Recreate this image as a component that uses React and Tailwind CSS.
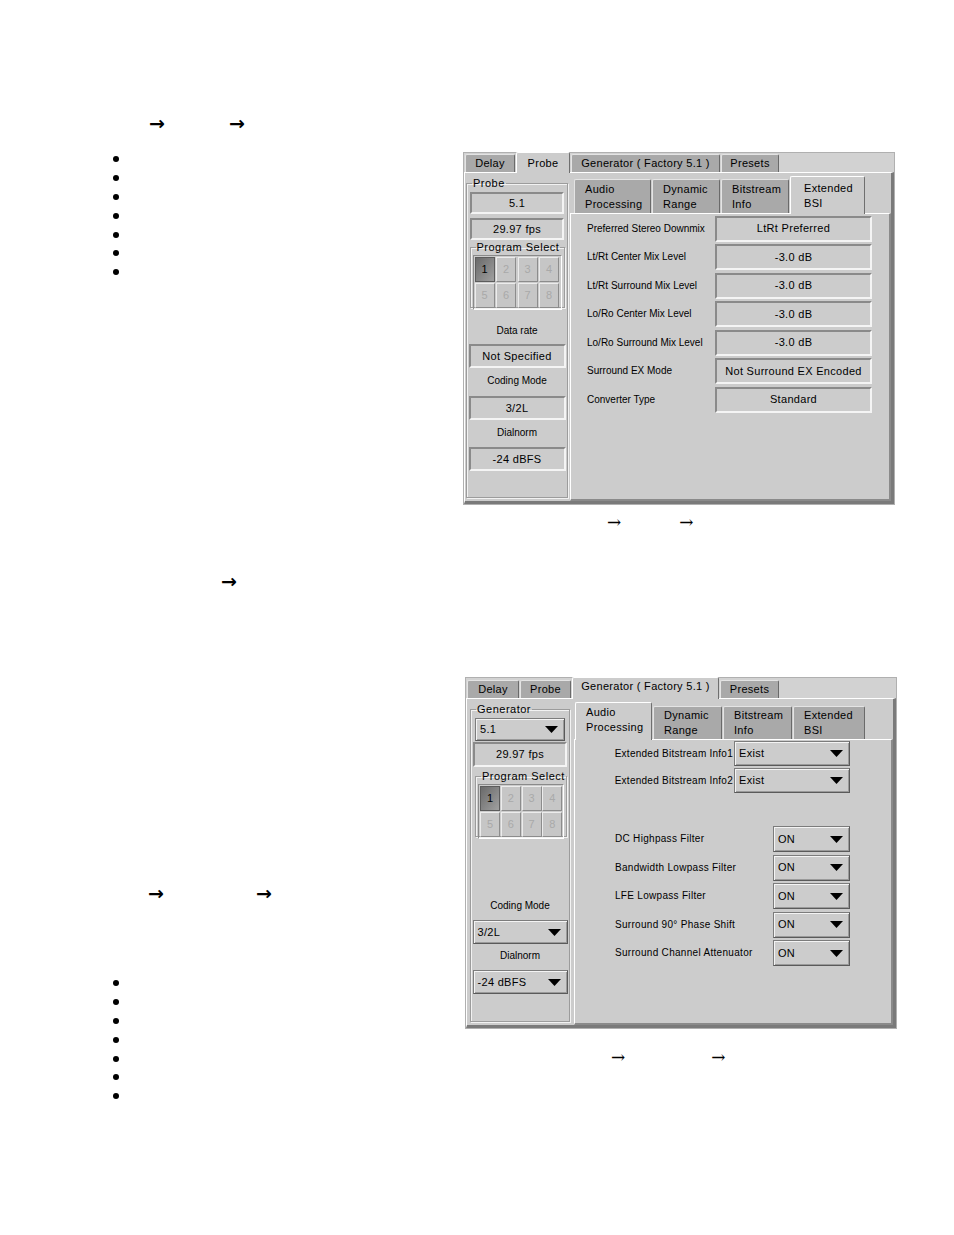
import React from "react";

const SANS = "font-['Liberation_Sans',Arial,sans-serif]";

function Tab({ children, active, w, h, two }) {
  const base =
    "flex flex-col justify-center border-t border-l border-r rounded-t-[2px] text-black tracking-[0.3px] " +
    (two ? "text-[11px] leading-[15px] items-start pl-[10px] " : "text-[11px] leading-none items-center ");
  const cls = active
    ? base + "bg-[#cccccc] border-t-white border-l-white border-r-[#6f6f6f] relative z-10 -mb-px"
    : base + "bg-[#a9a9a9] border-t-[#e4e4e4] border-l-[#e4e4e4] border-r-[#6a6a6a]";
  return (
    <div className={cls} style={{ width: w, height: h }}>
      {children}
    </div>
  );
}

function Sunken({ children, className }) {
  return (
    <div
      className={
        "flex items-center justify-center bg-[#cccccc] border-2 border-t-[#8a8a8a] border-l-[#8a8a8a] border-b-[#f4f4f4] border-r-[#f4f4f4] text-[11px] tracking-[0.3px] text-black " +
        className
      }
    >
      {children}
    </div>
  );
}

function Tri() {
  return (
    <svg width="13" height="7" viewBox="0 0 13 7" className="shrink-0">
      <polygon points="0,0 13,0 6.5,7" fill="#000" />
    </svg>
  );
}

function Drop({ children, className }) {
  return (
    <div
      className={
        "flex items-center justify-between pl-[4px] pr-[6px] bg-[#cccccc] border border-t-[#7c7c7c] border-l-[#7c7c7c] border-b-[#5a5a5a] border-r-[#5a5a5a] shadow-[inset_1px_1px_0_#f4f4f4,inset_-1px_-1px_0_#9a9a9a] text-[11px] tracking-[0.3px] text-black " +
        className
      }
    >
      <span>{children}</span>
      <Tri />
    </div>
  );
}

function Group({ label, children, className }) {
  return (
    <fieldset
      className={
        "border border-[#9c9c9c] shadow-[inset_1px_1px_0_#f2f2f2,1px_1px_0_#f2f2f2] " + className
      }
    >
      <legend className="ml-[5px] px-[1px] text-[11px] tracking-[0.5px] leading-[11px] text-black">
        {label}
      </legend>
      {children}
    </fieldset>
  );
}

function ProgramSelect({ className }) {
  const btn = (n) =>
    n === 1 ? (
      <div
        key={n}
        className="w-[20px] h-[25px] flex items-center justify-center bg-gradient-to-br from-[#6a6a6a] to-[#a0a0a0] border border-[#5c5c5c] text-[11px] text-black"
      >
        1
      </div>
    ) : (
      <div
        key={n}
        className="w-[20px] h-[25px] flex items-center justify-center bg-[#c6c6c6] border border-t-[#ececec] border-l-[#ececec] border-b-[#8c8c8c] border-r-[#8c8c8c] text-[11px] text-[#a9a9a9]"
      >
        {n}
      </div>
    );
  return (
    <Group label="Program Select" className={className}>
      <div className="mx-[2px] mt-[2px] p-[1px] border border-t-[#8a8a8a] border-l-[#8a8a8a] border-b-white border-r-white grid grid-cols-4 gap-[1px]">
        {[1, 2, 3, 4, 5, 6, 7, 8].map(btn)}
      </div>
    </Group>
  );
}

function Bullets({ className }) {
  return (
    <ul className={className}>
      {[0, 1, 2, 3, 4, 5, 6].map((i) => (
        <li key={i} className="h-[18.9px] flex items-center">
          <span className="ml-[113px] w-[6px] h-[6px] rounded-full bg-black" />
        </li>
      ))}
    </ul>
  );
}

function Arrow({ className, thin }) {
  return (
    <span
      className={
        (thin
          ? "font-['DejaVu_Serif',serif] text-[17px] "
          : "font-['DejaVu_Sans',sans-serif] font-bold text-[19px] ") +
        "leading-none text-black " +
        className
      }
    >
      →
    </span>
  );
}

function PanelProbe() {
  const rows = [
    ["Preferred Stereo Downmix", "LtRt Preferred"],
    ["Lt/Rt Center Mix Level", "-3.0 dB"],
    ["Lt/Rt Surround Mix Level", "-3.0 dB"],
    ["Lo/Ro Center Mix Level", "-3.0 dB"],
    ["Lo/Ro Surround Mix Level", "-3.0 dB"],
    ["Surround EX Mode", "Not Surround EX Encoded"],
    ["Converter Type", "Standard"],
  ];
  return (
    <div className={"w-[432px] h-[353px] bg-[#d2d2d2] border border-[#b0b0b0] flex flex-col " + SANS}>
      <div className="h-[19px] flex items-end pl-[1px] gap-[1px]">
        <Tab w={50} h={18}>Delay</Tab>
        <Tab w={54} h={21} active>Probe</Tab>
        <Tab w={149} h={18}>Generator ( Factory 5.1 )</Tab>
        <Tab w={58} h={18}>Presets</Tab>
      </div>
      <div className="flex-1 flex bg-[#cccccc] border-t border-l border-t-white border-l-white border-r-[3px] border-b-[3px] border-r-[#7a7a7a] border-b-[#7a7a7a]">
        <Group label="Probe" className="ml-[1px] mt-[5px] mb-[3px] w-[102px] flex flex-col items-center">
          <Sunken className="mt-[3px] w-[94px] h-[22px]">5.1</Sunken>
          <Sunken className="mt-[4px] w-[94px] h-[22px]">29.97 fps</Sunken>
          <ProgramSelect className="mt-[2px] w-[95px] h-[66px]" />
          <div className="mt-[17px] text-[10px] leading-[12px]">Data rate</div>
          <Sunken className="mt-[7px] w-[97px] h-[24px]">Not Specified</Sunken>
          <div className="mt-[7px] text-[10px] leading-[12px]">Coding Mode</div>
          <Sunken className="mt-[9px] w-[97px] h-[24px]">3/2L</Sunken>
          <div className="mt-[7px] text-[10px] leading-[12px]">Dialnorm</div>
          <Sunken className="mt-[8px] w-[97px] h-[24px]">-24 dBFS</Sunken>
        </Group>
        <div className="flex-1 flex flex-col ml-[2px] mt-[4px]">
          <div className="h-[36px] flex items-end pl-[4px] gap-[1px]">
            <Tab w={77} h={34} two>
              <span>Audio</span>
              <span>Processing</span>
            </Tab>
            <Tab w={68} h={34} two>
              <span>Dynamic</span>
              <span>Range</span>
            </Tab>
            <Tab w={68} h={34} two>
              <span>Bitstream</span>
              <span>Info</span>
            </Tab>
            <Tab w={75} h={38} two active>
              <span className="pl-[3px]">Extended</span>
              <span className="pl-[3px]">BSI</span>
            </Tab>
          </div>
          <div className="flex-1 bg-[#cccccc] border-t border-l border-t-white border-l-white border-r-2 border-b-2 border-r-[#8a8a8a] border-b-[#8a8a8a] pt-[2px] pl-[16px] flex flex-col gap-[3.5px]">
            {rows.map(([l, v]) => (
              <div key={l} className="flex items-center h-[25px]">
                <div className="w-[128px] text-[10px] leading-none text-black">{l}</div>
                <Sunken className="w-[157px] h-[26px]">{v}</Sunken>
              </div>
            ))}
          </div>
        </div>
      </div>
    </div>
  );
}

function PanelGen() {
  const filters = [
    "DC Highpass Filter",
    "Bandwidth Lowpass Filter",
    "LFE Lowpass Filter",
    "Surround 90\u00b0 Phase Shift",
    "Surround Channel Attenuator",
  ];
  return (
    <div className={"w-[432px] h-[352px] bg-[#d2d2d2] border border-[#b0b0b0] flex flex-col " + SANS}>
      <div className="h-[20px] flex items-end pl-[1px] gap-[1px]">
        <Tab w={52} h={18}>Delay</Tab>
        <Tab w={51} h={18}>Probe</Tab>
        <Tab w={147} h={22} active>
          <span className="-mt-[4px]">Generator ( Factory 5.1 )</span>
        </Tab>
        <Tab w={59} h={18}>Presets</Tab>
      </div>
      <div className="flex-1 flex bg-[#cccccc] border-t border-l border-t-white border-l-white border-r-[3px] border-b-[3px] border-r-[#7a7a7a] border-b-[#7a7a7a]">
        <Group label="Generator" className="ml-[3px] mt-[5px] mb-[3px] w-[100px] flex flex-col items-center">
          <Drop className="mt-[3px] w-[90px] h-[23px]">5.1</Drop>
          <Sunken className="mt-[1px] w-[94px] h-[25px]">29.97 fps</Sunken>
          <ProgramSelect className="mt-[4px] ml-[4px] w-[92px] h-[66px] self-start" />
          <div className="mt-[63px] text-[10px] leading-[12px]">Coding Mode</div>
          <Drop className="mt-[8px] w-[95px] h-[24px]">3/2L</Drop>
          <div className="mt-[6px] text-[10px] leading-[12px]">Dialnorm</div>
          <Drop className="mt-[8px] w-[95px] h-[24px]">-24 dBFS</Drop>
        </Group>
        <div className="flex-1 flex flex-col ml-[4px] mt-[4px]">
          <div className="h-[36px] flex items-end pl-[1px] gap-[1px]">
            <Tab w={77} h={38} two active>
              <span className="-mt-[3px]">Audio</span>
              <span>Processing</span>
            </Tab>
            <Tab w={69} h={33} two>
              <span>Dynamic</span>
              <span>Range</span>
            </Tab>
            <Tab w={69} h={33} two>
              <span>Bitstream</span>
              <span>Info</span>
            </Tab>
            <Tab w={72} h={33} two>
              <span>Extended</span>
              <span>BSI</span>
            </Tab>
          </div>
          <div className="flex-1 bg-[#cccccc] border-t border-l border-t-white border-l-white border-r-2 border-b-2 border-r-[#8a8a8a] border-b-[#8a8a8a] pt-[1px] flex flex-col">
            {["Extended Bitstream Info1", "Extended Bitstream Info2"].map((l, i) => (
              <div key={l} className={"flex items-center h-[25px] " + (i ? "mt-[2px]" : "")}>
                <div className="w-[158px] text-right text-[10px] tracking-[0.25px] leading-none text-black">{l}</div>
                <Drop className="ml-[1px] w-[116px] h-[25px]">Exist</Drop>
              </div>
            ))}
            <div className="mt-[33px] flex flex-col gap-[2.5px] pl-[40px]">
              {filters.map((l) => (
                <div key={l} className="flex items-center h-[26px]">
                  <div className="w-[158px] text-[10px] tracking-[0.3px] leading-none text-black">{l}</div>
                  <Drop className="w-[77px] h-[26px]">ON</Drop>
                </div>
              ))}
            </div>
          </div>
        </div>
      </div>
    </div>
  );
}

export default function App() {
  return (
    <div className="w-[954px] min-h-[1235px] bg-white pt-[115px] overflow-hidden">
      <div className="h-[16px] flex items-center">
        <Arrow className="ml-[149px]" />
        <Arrow className="ml-[64px]" />
      </div>
      <div className="mt-[21px] flex">
        <div className="w-[463px]">
          <Bullets className="-mt-[2.5px]" />
        </div>
        <div className="flex flex-col">
          <PanelProbe />
          <div className="mt-[9px] h-[16px] flex items-center">
            <Arrow thin className="ml-[144px]" />
            <Arrow thin className="ml-[58px]" />
          </div>
        </div>
      </div>
      <div className="mt-[43px] h-[16px] flex items-center">
        <Arrow className="ml-[221px]" />
      </div>
      <div className="mt-[88px] flex">
        <div className="w-[465px]">
          <div className="mt-[208px] h-[16px] flex items-center">
            <Arrow className="ml-[148px]" />
            <Arrow className="ml-[92px]" />
          </div>
          <Bullets className="mt-[72.5px]" />
        </div>
        <div className="flex flex-col">
          <PanelGen />
          <div className="mt-[20px] h-[16px] flex items-center">
            <Arrow thin className="ml-[146px]" />
            <Arrow thin className="ml-[86px]" />
          </div>
        </div>
      </div>
    </div>
  );
}
